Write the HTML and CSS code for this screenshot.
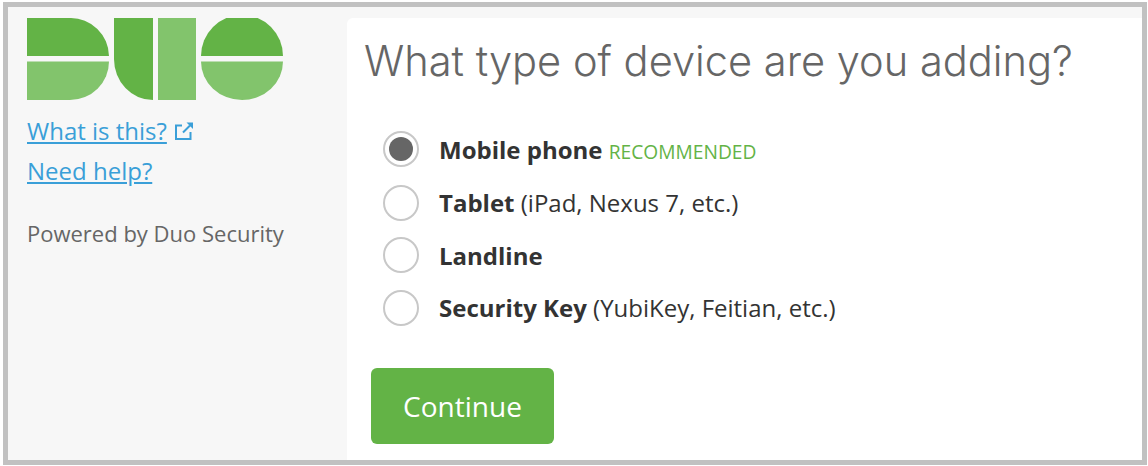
FILE: index.html
```html
<!DOCTYPE html>
<html lang="en">
<head>
<meta charset="utf-8">
<title>Duo device type</title>
<link rel="stylesheet" href="styles.css">
</head>
<body>
<div class="frame">
  <aside class="sidebar">
    <svg class="logo" viewBox="0 0 256 82" width="256" height="82" aria-label="Duo">
      <path class="dark" d="M0 0H43A38.5 38.5 0 0 1 82 38H0Z"/>
      <path class="light" d="M0 43.5H82A39 38.5 0 0 1 43 82H0Z"/>
      <path class="dark" d="M87 0H126V82A39 41 0 0 1 87 41Z"/>
      <rect class="light" x="131" y="0" width="38" height="82"/>
      <path class="dark" d="M174 38A41 41 0 0 1 256 38Z"/>
      <path class="light" d="M174 43.5H256A41 38.5 0 0 1 174 43.5Z"/>
    </svg>
    <p class="link-row first"><a href="#">What is this?</a>
      <svg class="ext" viewBox="0 0 20 20" width="20" height="20" aria-hidden="true">
        <path d="M8 4.5H2V18H16.5V11" fill="none" stroke="#3a9fd8" stroke-width="2"/>
        <path d="M9 11.5L16 4.5" fill="none" stroke="#3a9fd8" stroke-width="2"/>
        <path d="M12.5 1.5H19V8Z" fill="#3a9fd8"/>
      </svg>
    </p>
    <p class="link-row"><a href="#">Need help?</a></p>
    <p class="powered">Powered by Duo Security</p>
  </aside>
  <main class="panel">
    <h1>What type of device are you adding?</h1>
    <div class="options">
      <label class="option recommended"><span class="radio checked"></span><span class="label"><b>Mobile phone</b> <span class="rec">RECOMMENDED</span></span></label>
      <label class="option"><span class="radio"></span><span class="label"><b>Tablet</b> (iPad, Nexus 7, etc.)</span></label>
      <label class="option"><span class="radio"></span><span class="label"><b>Landline</b></span></label>
      <label class="option"><span class="radio"></span><span class="label"><b>Security Key</b> (YubiKey, Feitian, etc.)</span></label>
    </div>
    <button class="continue" type="button">Continue</button>
  </main>
</div>
</body>
</html>
```
FILE: styles.css
```css
* { box-sizing: border-box; }
html, body { margin: 0; padding: 0; background: #fff; }
body { padding: 2px 1px 1px 3px; height: 466px; font-family: "Open Sans", sans-serif; }
.frame {
  display: flex;
  height: 463px;
  border: 5px solid #c1c1c1;
  background: #f7f7f7;
}
.sidebar { width: 339px; padding: 11px 0 0 19px; flex: none; }
.logo { display: block; }
.link-row { margin: 0; font-size: 24px; line-height: 30px; height: 40px; }
.link-row.first { margin-top: 16px; }
.link-row a { color: #3a9fd8; text-decoration: underline; }
.ext { vertical-align: -1px; margin-left: 1px; }
.dark { fill: #63b346; }
.light { fill: #82c46c; }
.powered { margin: 23px 0 0; font-size: 22px; line-height: 28px; color: #666; white-space: nowrap; }
.panel {
  flex: 1;
  margin-top: 11px;
  padding: 0 24px;
  background: #fff;
  border-top-left-radius: 6px;
}
h1 {
  margin: 16px 0 0 -7px;
  font-family: "Inter", sans-serif;
  font-weight: 300;
  font-size: 41.6px;
  line-height: 54px;
  color: #666;
  white-space: nowrap;
}
.options { margin-top: 35px; padding-left: 12px; }
.option { display: flex; align-items: center; height: 52.5px; }
.option.recommended { margin-bottom: 1px; }
.radio {
  width: 36px;
  height: 36px;
  border: 2px solid #c8c8c8;
  border-radius: 50%;
  background: #fff;
  flex: none;
  display: flex;
  align-items: center;
  justify-content: center;
}
.radio.checked::after {
  content: "";
  width: 24px;
  height: 24px;
  border-radius: 50%;
  background: #666;
}
.label { margin-left: 20px; font-size: 24px; color: #333; white-space: nowrap; }
.label b { font-weight: 700; }
.rec { font-size: 19.2px; color: #63b346; }
.continue {
  display: block;
  margin-top: 34px;
  width: 183px;
  height: 76px;
  border: 0;
  border-radius: 6px;
  background: #63b346;
  color: #fff;
  font-family: "Open Sans", sans-serif;
  font-size: 28px;
}
```
